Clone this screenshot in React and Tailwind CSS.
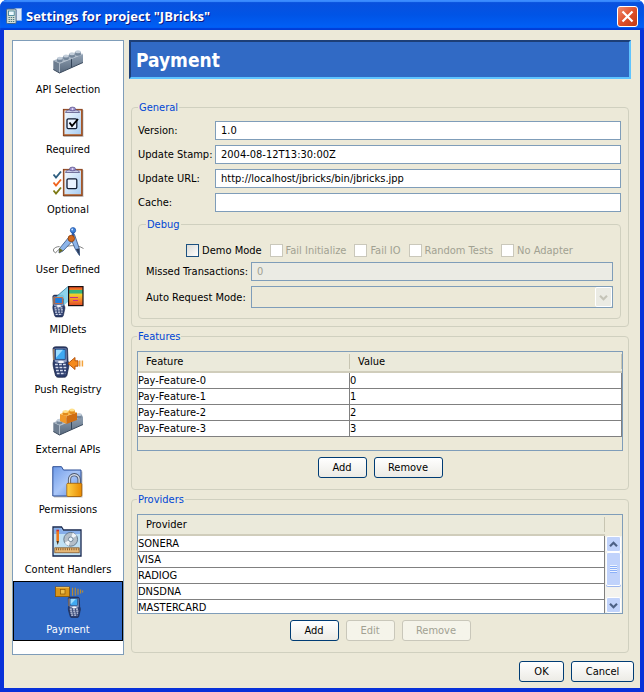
import React from "react";

function Defs() {
  return (
    <svg width="0" height="0" className="absolute" aria-hidden="true">
      <defs>
        <linearGradient id="sheet" x1="0" y1="0" x2="1" y2="1">
          <stop offset="0" stopColor="#f4faff" />
          <stop offset="1" stopColor="#a9cdf2" />
        </linearGradient>
        <linearGradient id="folder" x1="0" y1="0" x2="1" y2="1">
          <stop offset="0" stopColor="#6f9be8" />
          <stop offset="0.5" stopColor="#a9c6f8" />
          <stop offset="1" stopColor="#5d8ce0" />
        </linearGradient>
        <linearGradient id="gold" x1="0" y1="0" x2="1" y2="0">
          <stop offset="0" stopColor="#ffd24a" />
          <stop offset="1" stopColor="#e98a00" />
        </linearGradient>
        <linearGradient id="steel" x1="0" y1="0" x2="0" y2="1">
          <stop offset="0" stopColor="#93a3b5" />
          <stop offset="1" stopColor="#56677b" />
        </linearGradient>
        <linearGradient id="midlet" x1="0" y1="0" x2="0" y2="1">
          <stop offset="0" stopColor="#e8432a" />
          <stop offset="0.15" stopColor="#f07a20" />
          <stop offset="0.2" stopColor="#35b27c" />
          <stop offset="0.32" stopColor="#35b27c" />
          <stop offset="0.42" stopColor="#f6d02c" />
          <stop offset="0.7" stopColor="#f58a2a" />
          <stop offset="1" stopColor="#e04a28" />
        </linearGradient>
      </defs>
    </svg>
  );
}

function Icon({ children }) {
  return (
    <svg width="32" height="32" viewBox="0 0 32 32" aria-hidden="true">
      {children}
    </svg>
  );
}

function Stud({ x, y, top, side }) {
  return (
    <g>
      <path d={`M${x - 2.8} ${y}v2.4a2.8 1.5 0 0 0 5.6 0v-2.4z`} fill={side} />
      <ellipse cx={x} cy={y} rx="2.8" ry="1.5" fill={top} />
    </g>
  );
}

function GreyBricks() {
  return (
    <g>
      <path d="M1.300 14.500 23 6.500l8 1.500-23.500 9.500z" fill="#a7b4c3" />
      <path d="M1.300 14.500 7.500 17.500v9.500L1.300 23.500z" fill="#6d7d90" />
      <path d="M7.500 17.500 31 8v8.500L7.500 27z" fill="url(#steel)" />
      <path d="M19.500 12.700v9" stroke="#35455a" strokeWidth="1" />
      <path d="M1.300 23.500 7.500 27 31 16.500" fill="none" stroke="#3c4b5e" strokeWidth="1" />
      <path d="M7.500 17.500v8.500M7.500 17.500 31 8" stroke="#bac6d3" strokeWidth="0.700" />
    </g>
  );
}

function BricksIcon() {
  return (
    <Icon>
      <GreyBricks />
      <Stud x={7.8} y={12.3} top="#c3ceda" side="#74869a" />
      <Stud x={14} y={10} top="#c3ceda" side="#74869a" />
      <Stud x={20} y={7.8} top="#c3ceda" side="#74869a" />
      <Stud x={26} y={5.8} top="#c3ceda" side="#74869a" />
    </Icon>
  );
}

function ExternalIcon() {
  return (
    <Icon>
      <g transform="translate(0 2)">
        <GreyBricks />
        <Stud x={7.5} y={12.3} top="#c3ceda" side="#74869a" />
        <Stud x={27} y={6.500} top="#c3ceda" side="#74869a" />
      </g>
      <path d="m8 8 10-4 7 2.500L14.500 10z" fill="#ffc452" />
      <path d="M8 8l6.500 2v8L8 15z" fill="#f0982a" />
      <path d="M14.500 10 25 6.500V14l-10.500 4z" fill="#cf6d12" />
      <Stud x={13.5} y={5.5} top="#ffe08a" side="#e28a1c" />
      <Stud x={20} y={4} top="#ffe08a" side="#e28a1c" />
    </Icon>
  );
}

function Clipboard() {
  return (
    <g>
      <rect x="11.500" y="4" width="20" height="27" fill="#8c8c8c" opacity="0.500" />
      <rect x="11.300" y="3.300" width="18.900" height="26.400" fill="#b5632d" stroke="#7c3510" strokeWidth="0.800" />
      <rect x="12.500" y="4.500" width="16.500" height="23.700" fill="url(#sheet)" />
      <path d="M13.500 6.500c0-2 3-2.500 4.500-2.500h5c1.500 0 4.500.500 4.500 2.500z" fill="#c9cbe8" stroke="#5b5787" strokeWidth="0.800" />
      <ellipse cx="20.500" cy="3" rx="3" ry="1.900" fill="#9c8fd0" stroke="#5b5787" strokeWidth="0.700" />
      <circle cx="20.500" cy="3" r="0.800" fill="#fff" />
      <rect x="15" y="12.800" width="9.800" height="9.800" rx="1.300" fill="#eaf3ff" stroke="#111d33" strokeWidth="1.300" />
    </g>
  );
}

function RequiredIcon() {
  return (
    <Icon>
      <Clipboard />
      <path d="m17.500 16.500 2.500 3.500 6-7" fill="none" stroke="#000" strokeWidth="1.900" />
    </Icon>
  );
}

function OptionalIcon() {
  return (
    <Icon>
      <Clipboard />
      <path d="m1.500 8.500 2.500 3 5-6" fill="none" stroke="#2f5f80" strokeWidth="1.900" />
      <path d="m1.500 16.500 2.500 3 5-6" fill="none" stroke="#f0641e" strokeWidth="1.900" />
      <path d="m1.500 24.500 2.500 3 5-6" fill="none" stroke="#7d7a14" strokeWidth="1.900" />
    </Icon>
  );
}

function CompassIcon() {
  return (
    <Icon>
      <path d="M7.500 20.500c-6 .5-8 4-4 6.500 4-7 20-10 28-4.500" fill="none" stroke="#666" strokeWidth="0.800" />
      <path d="m17 11 4 3.500-10 10.500L7 27l.5-4.500z" fill="#8db5ea" stroke="#34507f" strokeWidth="0.800" />
      <path d="M18.500 12 22.500 8.500l4.800 14 .2 7-4-6z" fill="#8db5ea" stroke="#34507f" strokeWidth="0.800" />
      <path d="m7.500 22-.5 5 4-2.500z" fill="#6b6a1c" />
      <path d="m23.800 23 3.700 6.500-.3-7z" fill="#2a3c5c" />
      <path d="M21 6v5" stroke="#2d5cab" strokeWidth="2.500" />
      <circle cx="21" cy="4.300" r="2.700" fill="#3f83dc" stroke="#1d4fa0" strokeWidth="0.700" />
      <circle cx="20.200" cy="3.500" r="0.900" fill="#cfe4ff" />
      <circle cx="19.300" cy="12.500" r="3.200" fill="#d2691e" stroke="#8a3c08" strokeWidth="0.800" />
    </Icon>
  );
}

function Phone({ transform }) {
  return (
    <g transform={transform}>
      <path d="M1 3c0-1.500 1-2.200 3-2.200h8.500c2 0 3 .7 3 2.200l.5 12c1.200 2 1.200 4 .6 6.500l-1.600 7.500c-.4 1.800-1.500 2.300-3.500 2.300H7c-2 0-3.200-.5-3.600-2.300L1.500 21.500C1 19 .8 17 1.500 15z" fill="#2b3c6c" stroke="#151f3e" strokeWidth="0.700" />
      <path d="M2.600 2.500h11.800l.4 13c-2 2-10 2-12 0z" fill="#8d9cc0" />
      <path d="M1.800 3v11" stroke="#d8a25a" strokeWidth="0.900" />
      <rect x="3.600" y="3.300" width="9.600" height="10" fill="#3fa9f2" stroke="#12336e" strokeWidth="0.700" />
      <path d="M4 3.700h7l-7 8z" fill="#9bdcff" />
      <path d="M3 18.500h12M3.500 21.500h11M4 24.500h10M4.800 27.500h8.500" stroke="#d5dcee" strokeWidth="1.700" strokeDasharray="2.800 1.200" />
      <ellipse cx="9" cy="16" rx="3" ry="1.300" fill="#f4f6fd" />
    </g>
  );
}

function MidletsIcon() {
  return (
    <Icon>
      <Phone transform="translate(0 8.500) scale(0.760 0.720)" />
      <path d="m2 12.500 14-12V16l-4.500 3.500V12.500z" fill="#7fd0ea" opacity="0.900" />
      <rect x="2.800" y="11.500" width="7.500" height="6" fill="#1d7fe0" stroke="#e0642a" strokeWidth="0.800" />
      <path d="m4 11 12-10.500" stroke="#2a6f8f" strokeWidth="0.700" />
      <rect x="16.600" y="0.600" width="14.400" height="19" fill="url(#midlet)" stroke="#1a1010" strokeWidth="1.200" />
      <path d="M18 11.500h8M21 14.500h5" stroke="#c0308a" strokeWidth="1.100" />
    </Icon>
  );
}

function PushIcon() {
  return (
    <Icon>
      <Phone />
      <path d="m16 17.500 7-6v3.300h3v5.400h-3v3.300z" fill="#f58a1c" stroke="#b04c05" strokeWidth="0.900" />
      <path d="M27.700 14.500v6M30.400 14.500v6" stroke="#f3a33c" strokeWidth="1.500" />
    </Icon>
  );
}

function PermissionsIcon() {
  return (
    <Icon>
      <path d="M2 2h8l2 3.500h18.500V31.500H2z" fill="#777" opacity="0.450" />
      <path d="M.8.700h8.700L11.500 4h17.500v26H.8z" fill="url(#folder)" stroke="#2a4c94" strokeWidth="1" />
      <path d="M17.500 18v-4.500a4.800 4.800 0 0 1 9.600 0V18" fill="none" stroke="#4b566b" strokeWidth="3.200" />
      <path d="M17.500 18v-4.500a4.800 4.800 0 0 1 9.600 0V18" fill="none" stroke="#d5dce8" strokeWidth="1.400" />
      <rect x="14.800" y="17.300" width="15" height="13.200" rx="1.200" fill="url(#gold)" stroke="#a65e00" strokeWidth="0.800" />
    </Icon>
  );
}

function ContentIcon() {
  return (
    <Icon>
      <path d="M1 1h8.500L11.500 4H29v26H1z" fill="#bfe0f5" stroke="#16264e" strokeWidth="1.300" />
      <path d="M2 2h7l2 3h17v3H2z" fill="#86aeea" />
      <path d="M5.700 5v10" stroke="#f07818" strokeWidth="2.600" />
      <path d="M4.400 15h2.600l-1.300 4z" fill="#503010" />
      <path d="M4.400 4.500h2.600" stroke="#d02c2c" strokeWidth="1.600" />
      <circle cx="18.700" cy="13.300" r="6.900" fill="#b4bec8" stroke="#5f7488" strokeWidth="0.900" />
      <path d="m18.700 13.300 6-3.500a7 7 0 0 0-4-3.100zM18.700 13.300l-6 3.500a7 7 0 0 0 4 3.100z" fill="#f0f4f8" />
      <circle cx="18.700" cy="13.300" r="2.300" fill="#eaf6ff" stroke="#5f7488" strokeWidth="0.800" />
      <rect x="2.800" y="21.800" width="24.400" height="5" fill="#e6b878" stroke="#7a4c1c" strokeWidth="0.700" />
      <path d="M4 23.300h22.500" stroke="#7a4c1c" strokeWidth="2" strokeDasharray="0.800 1.400" />
    </Icon>
  );
}

function PaymentIcon() {
  return (
    <Icon>
      <rect x="3.400" y="1" width="14" height="9.600" fill="#d9961a" stroke="#8a5604" strokeWidth="0.800" />
      <path d="M4 1.600h13" stroke="#f6cc66" strokeWidth="0.900" />
      <rect x="8.500" y="3.500" width="4.500" height="4.500" fill="#f0c04c" stroke="#8a5604" strokeWidth="0.700" />
      <path d="M20.500 1.700v8M23.300 1.700v8M26 2.700v6M28.600 3.500v4M30.600 4.500v2" stroke="#b58a38" strokeWidth="1.200" />
      <Phone transform="translate(15.500 10.500) scale(0.760 0.680)" />
    </Icon>
  );
}

const SECTIONS = [
  ["API Selection", BricksIcon],
  ["Required", RequiredIcon],
  ["Optional", OptionalIcon],
  ["User Defined", CompassIcon],
  ["MIDlets", MidletsIcon],
  ["Push Registry", PushIcon],
  ["External APIs", ExternalIcon],
  ["Permissions", PermissionsIcon],
  ["Content Handlers", ContentIcon],
  ["Payment", PaymentIcon],
];

const FIELDS = [
  ["version", "Version:", "1.0"],
  ["stamp", "Update Stamp:", "2004-08-12T13:30:00Z"],
  ["url", "Update URL:", "http://localhost/jbricks/bin/jbricks.jpp"],
  ["cache", "Cache:", ""],
];

const CHECKS = ["Fail Initialize", "Fail IO", "Random Tests", "No Adapter"];

function Group({ title, className, children }) {
  return (
    <fieldset className={`min-w-0 rounded-[4px] border border-[#d0d0bf] ${className}`}>
      <legend className="px-px leading-[15px] text-[#0046d5]">{title}</legend>
      {children}
    </fieldset>
  );
}

function Button({ children, disabled, className }) {
  return (
    <button
      type="button"
      disabled={disabled}
      className={`h-[21px] rounded-[3px] border border-[#003c74] bg-linear-to-b from-white to-[#ecebe5] leading-[15px] text-black disabled:border-[#c9c7ba] disabled:from-[#f5f4ea] disabled:to-[#f5f4ea] disabled:text-[#a1a192] ${className}`}
    >
      {children}
    </button>
  );
}

function HeaderCell({ children }) {
  return (
    <th scope="col" className="h-[21px] border-b-2 border-[#d0cdbb] bg-[#ebeadb] p-0 text-left font-normal">
      <div className="h-[15px] border-r border-[#c7c5b2] pl-[8px] leading-[15px]">{children}</div>
    </th>
  );
}

function Chevron({ up, color }) {
  return (
    <svg width="9" height="7" viewBox="0 0 9 7" aria-hidden="true">
      <path d={up ? "M1 5.200 4.500 1.800 8 5.200" : "M1 1.800 4.500 5.200 8 1.800"} fill="none" stroke={color} strokeWidth="2.200" />
    </svg>
  );
}

function ScrollButton({ up }) {
  return (
    <button
      type="button"
      aria-label={up ? "Scroll up" : "Scroll down"}
      className="flex h-[16px] w-full items-center justify-center rounded-[2px] border border-white bg-[#c1d3fb]"
    >
      <Chevron up={up} color="#4d6185" />
    </button>
  );
}

export default function App() {
  return (
    <div className="flex min-h-screen flex-col overflow-hidden rounded-t-[7px] bg-[#0046e0] text-[11px] leading-[15px] text-black [font-family:'DejaVu_Sans_Condensed','DejaVu_Sans',sans-serif]">
      <Defs />
      <header className="flex h-[30px] items-center gap-[4px] bg-linear-to-b from-[#0a50dc] via-[#0054e6] to-[#0062fa] pt-[2px] pr-[6px] pl-[6px] shadow-[inset_0_2px_1px_#3b8cff,inset_0_-2px_1px_#003dd7]">
        <svg width="16" height="16" viewBox="0 0 16 16" aria-hidden="true">
          <rect x="9" y="0.500" width="6.500" height="12" fill="#dfeaf8" stroke="#8fb4e8" strokeWidth="0.800" />
          <rect x="0.600" y="1" width="9.500" height="14.500" rx="1" fill="#d5dfd8" stroke="#41648c" strokeWidth="1" />
          <rect x="2.500" y="3" width="5.700" height="4.500" fill="#eefaff" stroke="#357a90" strokeWidth="0.800" />
          <path d="M2.500 9.500h6M2.500 11.500h6M2.500 13.500h6" stroke="#487a86" strokeWidth="1.100" strokeDasharray="1.400 0.800" />
        </svg>
        <h1 className="flex-1 text-[13px] leading-[18px] font-bold whitespace-nowrap text-white [font-family:'Open_Sans','Noto_Sans',sans-serif] [text-shadow:1px_1px_#0a1883]">
          Settings for project "JBricks"
        </h1>
        <button type="button" aria-label="Close" className="flex h-[21px] w-[21px] items-center justify-center rounded-[3px] border border-white bg-linear-to-br from-[#ee8a6c] via-[#e0502a] to-[#c03a10]">
          <svg width="13" height="13" viewBox="0 0 13 13" aria-hidden="true">
            <path d="m1.500 1.500 10 10m0-10-10 10" stroke="#fff" strokeWidth="2.200" />
          </svg>
        </button>
      </header>

      <div className="flex flex-1 flex-col border-x-4 border-b-4 border-t-0 border-[#0831d9] bg-[#ece9d8] pt-[10px] pb-[6px] pl-[8px]">
        <div className="flex flex-1 gap-[5px] pr-[9px]">
          <nav aria-label="Settings sections" className="w-[112px] shrink-0 border border-[#7f9db9] bg-white">
            {SECTIONS.map(([name, Glyph]) => (
              <button
                key={name}
                type="button"
                aria-current={name === "Payment" ? "page" : undefined}
                className="flex h-[60px] w-full flex-col items-center gap-[4px] border border-transparent pt-[4px] aria-[current=page]:border-black aria-[current=page]:bg-[#316ac5] aria-[current=page]:text-white"
              >
                <Glyph />
                <span className="whitespace-nowrap">{name}</span>
              </button>
            ))}
          </nav>

          <main className="min-w-0 flex-1">
            <h2 className="h-[39px] border-2 border-t-[#1d3f77] border-r-[#5fc4ff] border-b-[#5fc4ff] border-l-[#1d3f77] bg-[#316ac5] pl-[5px] text-[19px] leading-[36px] font-bold text-white">
              Payment
            </h2>

            <div className="flex flex-col gap-[2px] pt-[21px] pr-[2px] pb-[2px] pl-[2px]">
              <Group title="General" className="pr-[7px] pb-[7px] pl-[6px]">
                <div className="grid grid-cols-[72px_1fr] items-center gap-x-[5px] gap-y-[5px] pt-[6px] pb-[5px]">
                  {FIELDS.map(([id, label, value]) => (
                    <React.Fragment key={id}>
                      <label htmlFor={id} className="whitespace-nowrap">{label}</label>
                      <input id={id} type="text" defaultValue={value} className="h-[19px] w-full border border-[#7f9db9] bg-white px-[5px]" />
                    </React.Fragment>
                  ))}
                </div>

                <Group title="Debug" className="pr-[7px] pb-[10px] pl-[7px]">
                  <div className="flex justify-center gap-[8px] pt-[11px]">
                    <label className="flex items-center gap-[3px] whitespace-nowrap">
                      <input type="checkbox" className="h-[13px] w-[13px] appearance-none border border-[#1c5180] bg-linear-to-br from-[#dcdcd7] to-white" />
                      Demo Mode
                    </label>
                    {CHECKS.map((name) => (
                      <label key={name} className="flex items-center gap-[3px] whitespace-nowrap text-[#a1a192]">
                        <input type="checkbox" disabled className="h-[13px] w-[13px] appearance-none border border-[#cac8bb] bg-white" />
                        {name}
                      </label>
                    ))}
                  </div>
                  <div className="grid grid-cols-[100px_1fr] items-center gap-x-[5px] gap-y-[5px] pt-[4px]">
                    <label htmlFor="missed" className="whitespace-nowrap">Missed Transactions:</label>
                    <input id="missed" type="text" disabled defaultValue="0" className="h-[19px] w-full border border-[#7f9db9] bg-[#ebebe4] px-[5px] text-[#a1a192]" />
                    <label htmlFor="mode" className="whitespace-nowrap">Auto Request Mode:</label>
                    <div className="relative">
                      <select id="mode" disabled className="block h-[22px] w-full appearance-none border border-[#7f9db9] bg-[#ece9d8]" />
                      <span className="pointer-events-none absolute top-px right-px flex h-[20px] w-[17px] items-center justify-center rounded-[2px] border border-white bg-[#ebebe4]">
                        <Chevron color="#c5c4b8" />
                      </span>
                    </div>
                  </div>
                </Group>
              </Group>

              <Group title="Features" className="px-[5px] pb-[11px]">
                <div className="mt-[7px] h-[100px] border border-[#7f9db9]">
                  <table className="w-full table-fixed border-separate border-spacing-0">
                    <colgroup>
                      <col className="w-[212px]" />
                      <col />
                    </colgroup>
                    <thead>
                      <tr>
                        <HeaderCell>Feature</HeaderCell>
                        <HeaderCell>Value</HeaderCell>
                      </tr>
                    </thead>
                    <tbody>
                      {[0, 1, 2, 3].map((n) => (
                        <tr key={n}>
                          <td className="h-[16px] border-r border-b border-[#808080] bg-white p-0 leading-[15px]">Pay-Feature-{n}</td>
                          <td className="h-[16px] border-r border-b border-[#808080] bg-white p-0 leading-[15px]">{n}</td>
                        </tr>
                      ))}
                    </tbody>
                  </table>
                </div>
                <div className="flex justify-center gap-[7px] pt-[6px]">
                  <Button className="w-[49px]">Add</Button>
                  <Button className="w-[69px]">Remove</Button>
                </div>
              </Group>

              <Group title="Providers" className="px-[5px] pb-[11px]">
                <div className="mt-[7px] flex h-[100px] overflow-hidden border border-[#7f9db9]">
                  <div className="min-w-0 flex-1">
                    <table className="w-full table-fixed border-separate border-spacing-0">
                      <thead>
                        <tr>
                          <HeaderCell>Provider</HeaderCell>
                        </tr>
                      </thead>
                      <tbody>
                        {["SONERA", "VISA", "RADIOG", "DNSDNA", "MASTERCARD"].map((name) => (
                          <tr key={name}>
                            <td className="h-[16px] border-r border-b border-[#808080] bg-white p-0 leading-[15px]">{name}</td>
                          </tr>
                        ))}
                      </tbody>
                    </table>
                  </div>
                  <div className="mt-[21px] flex w-[17px] flex-col bg-[#f4f3ee] px-px">
                    <ScrollButton up />
                    <div className="flex h-[34px] flex-col items-center justify-center rounded-[2px] border border-white bg-[#c1d3fb] shadow-[0_1px_#9db7ee]">
                      {[0, 1, 2, 3].map((n) => (
                        <span key={n} className="h-[2px] w-[7px] shrink-0 border-t border-b border-t-[#eef4fe] border-b-[#8cb0f8]" />
                      ))}
                    </div>
                    <div className="flex-1" />
                    <ScrollButton />
                  </div>
                </div>
                <div className="flex justify-center gap-[7px] pt-[6px]">
                  <Button className="w-[49px]">Add</Button>
                  <Button disabled className="w-[49px]">Edit</Button>
                  <Button disabled className="w-[69px]">Remove</Button>
                </div>
              </Group>
            </div>
          </main>
        </div>

        <footer className="flex justify-end gap-[7px] pt-[6px] pr-[6px]">
          <Button className="w-[45px]">OK</Button>
          <Button className="w-[63px]">Cancel</Button>
        </footer>
      </div>
    </div>
  );
}
